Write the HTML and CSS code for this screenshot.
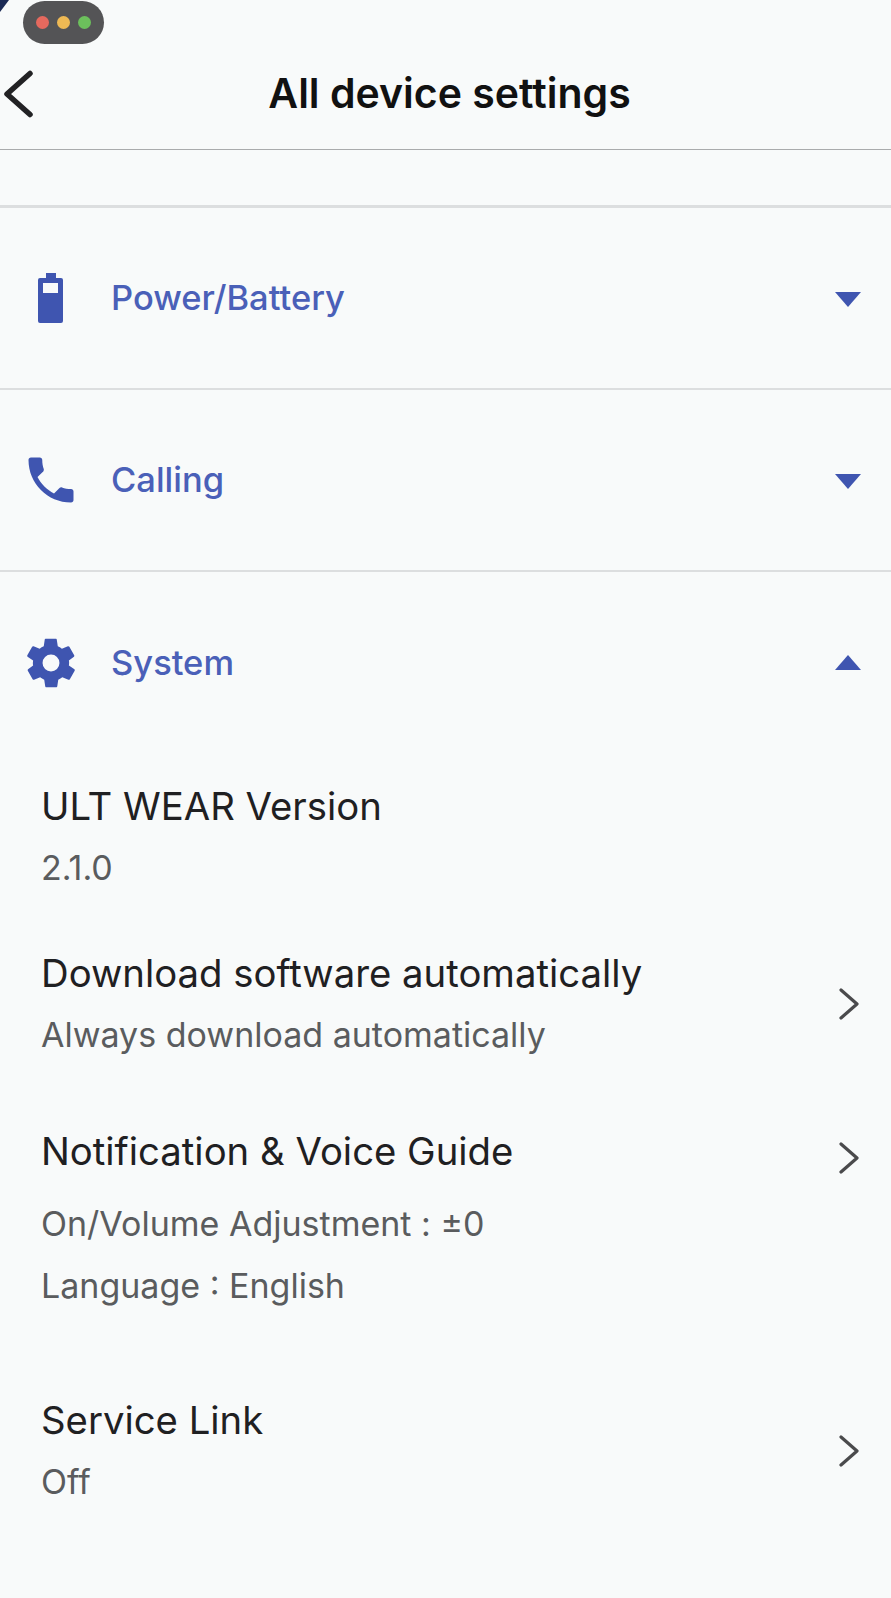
FILE: index.html
```html
<!DOCTYPE html>
<html lang="en">
<head>
    <meta charset="UTF-8">
    <meta name="viewport" content="width=device-width, initial-scale=1.0">
    <title>All device settings</title>
    <link rel="stylesheet" href="styles.css">
</head>
<body>

<!-- Window controls over the top corner -->
<div class="corner"></div>
<div class="window-dots">
    <span class="dot dot-red"></span>
    <span class="dot dot-yellow"></span>
    <span class="dot dot-green"></span>
</div>

<header class="top-bar">
    <svg class="back" viewBox="0 0 32 48" width="32" height="48">
        <path d="M28 3.5 L5 24 L28 44.5" fill="none" stroke="#222224" stroke-width="5.5" stroke-linecap="round" stroke-linejoin="round"/>
    </svg>
    <h1>All device settings</h1>
</header>

<div class="spacer"></div>

<section class="group">
    <div class="group-head">
        <svg class="group-icon" viewBox="-3 0 58 52" width="58" height="52">
            <path d="M21 1 H31 V6 H36 Q38 6 38 8 V49 Q38 51 36 51 H15 Q13 51 13 49 V8 Q13 6 15 6 H21 Z M18 11 V21 H33 V11 Z" fill="#3f55b0" fill-rule="evenodd"/>
        </svg>
        <span class="group-name">Power/Battery</span>
        <span class="arrow-down"></span>
    </div>
</section>

<section class="group">
    <div class="group-head">
        <svg class="group-icon phone-icon" viewBox="0 0 24 24" width="60" height="60">
            <path d="M6.6 10.8c1.4 2.8 3.8 5.1 6.6 6.6l2.2-2.2c.3-.3.7-.4 1-.2 1.1.4 2.3.6 3.6.6.6 0 1 .4 1 1V20c0 .6-.4 1-1 1C10.6 21 3 13.4 3 4c0-.6.4-1 1-1h3.5c.6 0 1 .4 1 1 0 1.3.2 2.5.6 3.6.1.3 0 .7-.2 1z" fill="#3f55b0"/>
        </svg>
        <span class="group-name">Calling</span>
        <span class="arrow-down"></span>
    </div>
</section>

<section class="group group-open">
    <div class="group-head">
        <svg class="group-icon" viewBox="0 0 24 24" width="58" height="58">
            <path d="M19.4 13c0-.3.1-.6.1-1s0-.7-.1-1l2.1-1.6c.2-.2.2-.4.1-.6l-2-3.5c-.1-.2-.4-.3-.6-.2l-2.5 1c-.5-.4-1.1-.7-1.7-1l-.4-2.7c0-.2-.2-.4-.5-.4h-4c-.3 0-.5.2-.5.4l-.4 2.7c-.6.3-1.2.6-1.7 1l-2.5-1c-.2-.1-.5 0-.6.2l-2 3.5c-.1.2-.1.4.1.6L4.6 11c0 .3-.1.7-.1 1s0 .7.1 1l-2.1 1.6c-.2.2-.2.4-.1.6l2 3.5c.1.2.4.3.6.2l2.5-1c.5.4 1.1.7 1.7 1l.4 2.7c0 .2.2.4.5.4h4c.3 0 .5-.2.5-.4l.4-2.7c.6-.3 1.2-.6 1.7-1l2.5 1c.2.1.5 0 .6-.2l2-3.5c.1-.2.1-.4-.1-.6L19.4 13zM12 15.5a3.500 3.500 0 1 1 0-7 3.500 3.500 0 0 1 0 7z" fill="#3f55b0"/>
        </svg>
        <span class="group-name">System</span>
        <span class="arrow-up"></span>
    </div>

    <div class="item item-version">
        <div class="item-text">
            <div class="item-title">ULT WEAR Version</div>
            <div class="item-sub">2.1.0</div>
        </div>
    </div>

    <div class="item item-download">
        <div class="item-text">
            <div class="item-title">Download software automatically</div>
            <div class="item-sub">Always download automatically</div>
        </div>
        <svg class="chev" viewBox="0 0 20 32" width="20" height="32"><path d="M2 2 L18 16 L2 30" fill="none" stroke="#4a4a4c" stroke-width="3.2" stroke-linecap="round" stroke-linejoin="round"/></svg>
    </div>

    <div class="item item-voice">
        <div class="item-text">
            <div class="item-title">Notification &amp; Voice Guide</div>
            <div class="item-sub">On/Volume Adjustment : ±0</div>
            <div class="item-sub">Language : English</div>
        </div>
        <svg class="chev" viewBox="0 0 20 32" width="20" height="32"><path d="M2 2 L18 16 L2 30" fill="none" stroke="#4a4a4c" stroke-width="3.2" stroke-linecap="round" stroke-linejoin="round"/></svg>
    </div>

    <div class="item item-link">
        <div class="item-text">
            <div class="item-title">Service Link</div>
            <div class="item-sub">Off</div>
        </div>
        <svg class="chev" viewBox="0 0 20 32" width="20" height="32"><path d="M2 2 L18 16 L2 30" fill="none" stroke="#4a4a4c" stroke-width="3.2" stroke-linecap="round" stroke-linejoin="round"/></svg>
    </div>
</section>

</body>
</html>
```

FILE: styles.css
```css
html, body {
    height: 100%;
}

body {
    font-family: Inter, Roboto, "Liberation Sans", sans-serif;
    background-color: #f8fafa;
    margin: 0;
    padding: 0;
    overflow: hidden;
    color: #1f2022;
}

.corner {
    position: absolute;
    left: 0;
    top: 0;
    width: 0;
    height: 0;
    border-top: 12px solid #1b2a55;
    border-right: 9px solid transparent;
}

.window-dots {
    position: absolute;
    left: 23px;
    top: 1px;
    width: 81px;
    height: 43px;
    border-radius: 22px;
    background-color: #545456;
    display: flex;
    justify-content: center;
    align-items: center;
    gap: 8px;
}

.dot {
    width: 13px;
    height: 13px;
    border-radius: 50%;
}

.dot-red { background-color: #e5695e; }
.dot-yellow { background-color: #eeb954; }
.dot-green { background-color: #6cc05c; }

.top-bar {
    height: 149px;
    border-bottom: 1px solid #a9abac;
    position: relative;
    display: flex;
    justify-content: center;
    align-items: flex-end;
    padding-left: 8px;
}

.top-bar h1 {
    margin: 0 0 32px 0;
    font-size: 41px;
    line-height: 48px;
    font-weight: 600;
    color: #111;
}

.back {
    position: absolute;
    left: 2px;
    top: 70px;
}

.spacer {
    height: 55px;
}

.group {
    border-top: 3px solid #dcdedf;
}

.group + .group {
    border-top-width: 2px;
}

.group-head {
    height: 180px;
    display: flex;
    align-items: center;
    padding: 0 30px 0 22px;
}

.group-icon {
    flex: none;
    margin-right: 31px;
}

.phone-icon {
    margin-left: -1px;
    margin-right: 30px;
}

.group-name {
    flex: 1;
    font-size: 34.5px;
    font-weight: 500;
    margin-bottom: 1px;
    color: #4a60b8;
}

.arrow-down {
    width: 0;
    height: 0;
    margin-top: 3px;
    border-left: 13px solid transparent;
    border-right: 13px solid transparent;
    border-top: 15px solid #3f55b0;
}

.arrow-up {
    width: 0;
    height: 0;
    margin-bottom: 1px;
    border-left: 13px solid transparent;
    border-right: 13px solid transparent;
    border-bottom: 15px solid #3f55b0;
}

.group-open .group-head {
    height: 181px;
}

.item {
    display: flex;
    align-items: center;
    padding: 0 32px 0 41px;
}

.item-text {
    flex: 1;
}

.item-title {
    font-size: 38.3px;
    line-height: 58px;
    margin-bottom: 2px;
}

.item-sub {
    font-size: 34px;
    line-height: 62px;
    color: #5a5c5e;
}

.chev {
    flex: none;
    margin-bottom: 3px;
}

.item-version { margin-top: 24px; }
.item-download { margin-top: 45px; }
.item-voice { margin-top: 56px; }
.item-link { margin-top: 74px; }

.item-voice .item-title {
    margin-bottom: 13px;
}

.item-voice .chev {
    align-self: flex-start;
    margin-top: 20px;
}
```
